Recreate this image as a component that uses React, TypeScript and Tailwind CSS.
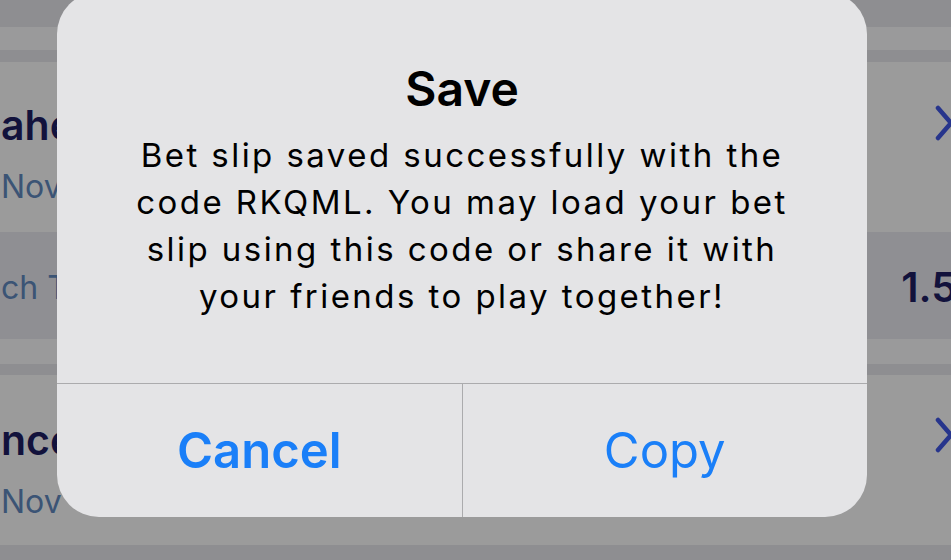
import React from 'react';

function Chevron() {
  return (
    <svg width="22" height="36" viewBox="0 0 22 36" className="mr-[-6px] shrink-0">
      <polyline points="3,3 16,18 3,33" fill="none" stroke="#27358c" strokeWidth="4.5" strokeLinecap="round" strokeLinejoin="round" />
    </svg>
  );
}

export default function App() {
  return (
    <div className="relative w-[951px] h-[560px] overflow-hidden bg-[#9a9a9b] font-['Inter',sans-serif]">
      {/* page behind the alert */}
      <div className="h-[27px] bg-[#8e8e91]" />
      <div className="h-[23px] bg-[#9a9a9b]" />
      <div className="h-[12px] bg-[#8e8e91]" />

      <div className="h-[170px] bg-[#9b9b9b] flex items-start justify-between pl-[1px]">
        <div className="flex flex-col pt-[43px]">
          <span className="text-[41px] leading-none font-semibold text-[#12123c]">ahead</span>
          <span className="mt-[25px] text-[32px] leading-none text-[#3b5475]">Nov</span>
        </div>
        <div className="pt-[43px]">
          <Chevron />
        </div>
      </div>

      <div className="h-[107px] bg-[#8f8f93] flex items-start justify-between pl-[1px]">
        <span className="pt-[40px] text-[32px] leading-none text-[#3b5475]">ch Total</span>
        <span className="pt-[35px] mr-[-6px] text-[41px] leading-none font-semibold text-[#12123c]">1.5</span>
      </div>

      <div className="h-[25px] bg-[#9a9a9b]" />
      <div className="h-[11px] bg-[#8e8e91]" />

      <div className="h-[170px] bg-[#9b9b9b] flex items-start justify-between pl-[1px]">
        <div className="flex flex-col pt-[45px]">
          <span className="text-[41px] leading-none font-semibold text-[#12123c]">nce</span>
          <span className="mt-[25px] text-[32px] leading-none text-[#3b5475]">Nov</span>
        </div>
        <div className="pt-[42px]">
          <Chevron />
        </div>
      </div>

      <div className="h-[15px] bg-[#8e8e91]" />

      {/* alert */}
      <div className="absolute left-[57px] top-[-8px] w-[810px] h-[525px] rounded-[42px] bg-[#e4e4e6] flex flex-col overflow-hidden">
        <div className="h-[392px] flex flex-col items-center border-b border-[#ababad]">
          <h2 className="mt-[73px] text-[48px] leading-none font-semibold text-black">Save</h2>
          <p className="mt-[19px] text-[33px] leading-[47px] text-black text-center tracking-[2.45px]">
            <span className="block whitespace-nowrap">Bet slip saved successfully with the</span>
            <span className="block whitespace-nowrap">code RKQML. You may load your bet</span>
            <span className="block whitespace-nowrap">slip using this code or share it with</span>
            <span className="block whitespace-nowrap">your friends to play together!</span>
          </p>
        </div>
        <div className="flex-1 flex">
          <button className="flex-1 flex items-center justify-center border-r border-[#ababad] text-[49px] leading-none font-semibold text-[#1a7ff8]">
            Cancel
          </button>
          <button className="flex-1 flex items-center justify-center text-[49px] leading-none text-[#1a7ff8]">
            Copy
          </button>
        </div>
      </div>
    </div>
  );
}
